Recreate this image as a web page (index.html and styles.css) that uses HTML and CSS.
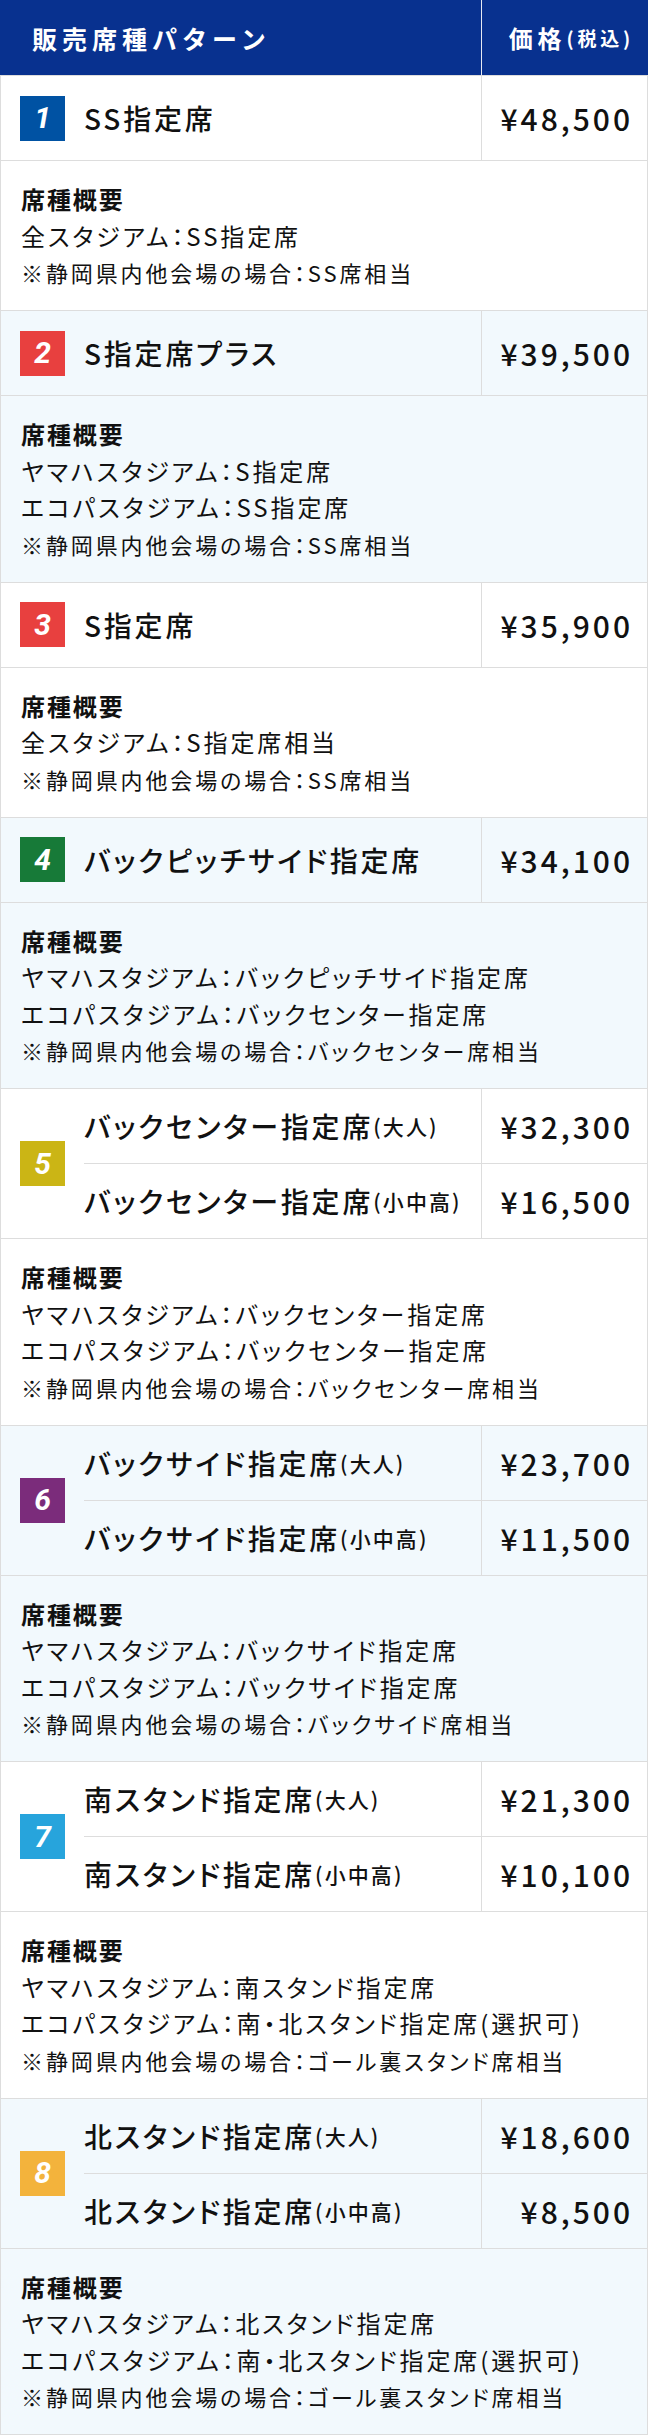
FILE: index.html
```html
<!DOCTYPE html>
<html lang="ja">
<head>
<meta charset="utf-8">
<title>販売席種パターン</title>
<link rel="stylesheet" href="styles.css">
</head>
<body>
<div class="table">
  <div class="head">
    <div class="hcell">販売席種パターン</div>
    <div class="hcell hprice">価格<small>(税込)</small></div>
  </div>

  <section class="block first">
    <div class="row">
      <div class="badge-cell"><span class="badge c1">1</span></div>
      <div class="name">SS指定席</div>
      <div class="price">¥48,500</div>
    </div>
    <div class="desc">
      <p class="dt">席種概要</p>
      <p>全スタジアム：SS指定席</p>
      <p class="note">※静岡県内他会場の場合：SS席相当</p>
    </div>
  </section>

  <section class="block alt">
    <div class="row">
      <div class="badge-cell"><span class="badge c2">2</span></div>
      <div class="name">S指定席プラス</div>
      <div class="price">¥39,500</div>
    </div>
    <div class="desc">
      <p class="dt">席種概要</p>
      <p>ヤマハスタジアム：S指定席</p>
      <p>エコパスタジアム：SS指定席</p>
      <p class="note">※静岡県内他会場の場合：SS席相当</p>
    </div>
  </section>

  <section class="block">
    <div class="row">
      <div class="badge-cell"><span class="badge c2">3</span></div>
      <div class="name">S指定席</div>
      <div class="price">¥35,900</div>
    </div>
    <div class="desc">
      <p class="dt">席種概要</p>
      <p>全スタジアム：S指定席相当</p>
      <p class="note">※静岡県内他会場の場合：SS席相当</p>
    </div>
  </section>

  <section class="block alt">
    <div class="row">
      <div class="badge-cell"><span class="badge c4">4</span></div>
      <div class="name">バックピッチサイド指定席</div>
      <div class="price">¥34,100</div>
    </div>
    <div class="desc">
      <p class="dt">席種概要</p>
      <p>ヤマハスタジアム：バックピッチサイド指定席</p>
      <p>エコパスタジアム：バックセンター指定席</p>
      <p class="note">※静岡県内他会場の場合：バックセンター席相当</p>
    </div>
  </section>

  <section class="block">
    <div class="row double">
      <div class="badge-cell"><span class="badge c5">5</span></div>
      <div class="name top">バックセンター指定席<small>(大人)</small></div>
      <div class="price top">¥32,300</div>
      <div class="name">バックセンター指定席<small>(小中高)</small></div>
      <div class="price">¥16,500</div>
    </div>
    <div class="desc">
      <p class="dt">席種概要</p>
      <p>ヤマハスタジアム：バックセンター指定席</p>
      <p>エコパスタジアム：バックセンター指定席</p>
      <p class="note">※静岡県内他会場の場合：バックセンター席相当</p>
    </div>
  </section>

  <section class="block alt">
    <div class="row double">
      <div class="badge-cell"><span class="badge c6">6</span></div>
      <div class="name top">バックサイド指定席<small>(大人)</small></div>
      <div class="price top">¥23,700</div>
      <div class="name">バックサイド指定席<small>(小中高)</small></div>
      <div class="price">¥11,500</div>
    </div>
    <div class="desc">
      <p class="dt">席種概要</p>
      <p>ヤマハスタジアム：バックサイド指定席</p>
      <p>エコパスタジアム：バックサイド指定席</p>
      <p class="note">※静岡県内他会場の場合：バックサイド席相当</p>
    </div>
  </section>

  <section class="block">
    <div class="row double">
      <div class="badge-cell"><span class="badge c7">7</span></div>
      <div class="name top">南スタンド指定席<small>(大人)</small></div>
      <div class="price top">¥21,300</div>
      <div class="name">南スタンド指定席<small>(小中高)</small></div>
      <div class="price">¥10,100</div>
    </div>
    <div class="desc">
      <p class="dt">席種概要</p>
      <p>ヤマハスタジアム：南スタンド指定席</p>
      <p>エコパスタジアム：南・北スタンド指定席(選択可)</p>
      <p class="note">※静岡県内他会場の場合：ゴール裏スタンド席相当</p>
    </div>
  </section>

  <section class="block alt">
    <div class="row double">
      <div class="badge-cell"><span class="badge c8">8</span></div>
      <div class="name top">北スタンド指定席<small>(大人)</small></div>
      <div class="price top">¥18,600</div>
      <div class="name">北スタンド指定席<small>(小中高)</small></div>
      <div class="price">¥8,500</div>
    </div>
    <div class="desc">
      <p class="dt">席種概要</p>
      <p>ヤマハスタジアム：北スタンド指定席</p>
      <p>エコパスタジアム：南・北スタンド指定席(選択可)</p>
      <p class="note">※静岡県内他会場の場合：ゴール裏スタンド席相当</p>
    </div>
  </section>
</div>
</body>
</html>
```

FILE: styles.css
```css
* { box-sizing: border-box; }
html, body { margin: 0; padding: 0; background: #fff; }
body {
  font-family: "Noto Sans CJK JP", "Noto Sans", sans-serif;
  color: #111;
}
.table { width: 648px; }

.head {
  display: grid;
  grid-template-columns: 481px 1fr;
  height: 75px;
  background: #08318f;
  color: #fff;
}
.hcell {
  display: flex;
  align-items: center;
  padding-left: 32px;
  font-size: 25px;
  font-weight: 700;
  letter-spacing: 0.2em;
}
.hprice {
  border-left: 1px solid #e6e9f2;
  justify-content: flex-end;
  padding-left: 0;
  padding-right: 14px;
  font-size: 24px;
}
.hprice small { font-size: 19px; letter-spacing: 0.2em; }

.block {
  border-left: 1px solid #ddd;
  border-right: 1px solid #ddd;
  border-bottom: 1px solid #ddd;
  background: #fff;
}
.block.first { border-top: 1px solid #ddd; }
.block.alt { background: #f2f9fd; }

.row {
  display: grid;
  grid-template-columns: 83px 1fr 166px;
  border-bottom: 1px solid #ddd;
}
.badge-cell {
  display: flex;
  align-items: center;
  padding-left: 19px;
}
.double .badge-cell { grid-row: 1 / span 2; }
.badge {
  width: 45px;
  height: 45px;
  display: flex;
  align-items: center;
  justify-content: center;
  color: #fff;
  font-family: Roboto, "Liberation Sans", sans-serif;
  font-style: italic;
  font-weight: 700;
  font-size: 30px;
  line-height: 1;
}
.c1 { background: #0052a3; }
.c2 { background: #e8403f; }
.c4 { background: #177a38; }
.c5 { background: #cbb515; }
.c6 { background: #7b2c7b; }
.c7 { background: #27a4dc; }
.c8 { background: #f3b33c; }

.name, .price {
  height: 84px;
  display: flex;
  align-items: center;
  font-size: 28px;
  font-weight: 500;
  letter-spacing: 0.1em;
  white-space: nowrap;
}
.name { font-feature-settings: "palt"; }
.price {
  border-left: 1px solid #ddd;
  justify-content: flex-end;
  padding-right: 14px;
  font-size: 30px;
  letter-spacing: 0.1em;
}
.double .name, .double .price { height: 74px; }
.double .top { height: 75px; border-bottom: 1px solid #ddd; }
.name small { font-size: 21px; letter-spacing: 0.1em; }

.desc {
  padding: 20px 20px 19.5px;
  font-size: 24px;
  line-height: 36.5px;
  letter-spacing: 0.12em;
  font-feature-settings: "palt";
}
.desc p { margin: 0; }
.desc .dt { font-weight: 700; letter-spacing: 0.08em; }
.desc .note { font-size: 22px; }
```
